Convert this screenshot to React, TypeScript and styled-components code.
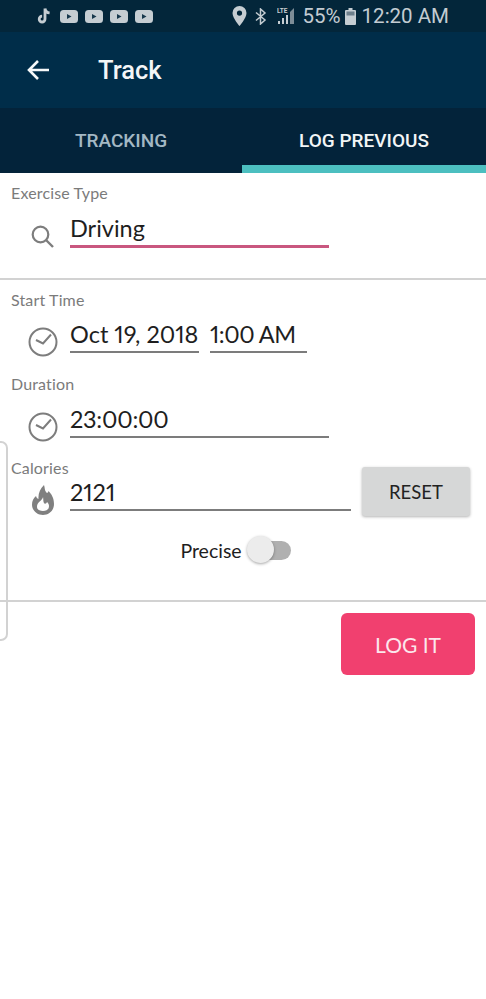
import styled, { createGlobalStyle } from "styled-components";

const GlobalStyle = createGlobalStyle`
  html, body {
    margin: 0;
    padding: 0;
    background: #fff;
  }
  * {
    box-sizing: border-box;
  }
`;

const Page = styled.div`
  position: relative;
  width: 486px;
  height: 999px;
  overflow: hidden;
  background: #fff;
  font-family: Lato, "Open Sans", sans-serif;
  color: #1d1d1d;
`;

const StatusBar = styled.div`
  height: 32px;
  background: #03263a;
  display: flex;
  align-items: center;
  justify-content: space-between;
  padding: 0 37px 0 37px;
  color: #c3ccd2;
  font-family: Roboto, sans-serif;
`;

const IconGroup = styled.div<{ $gap: number }>`
  display: flex;
  align-items: center;
  gap: ${(p) => p.$gap}px;
`;

const StatusItem = styled.span<{ $left?: number }>`
  display: flex;
  align-items: center;
  font-size: 20.5px;
  line-height: 32px;
  margin-left: ${(p) => p.$left ?? 0}px;
`;

const AppBar = styled.div`
  height: 76px;
  background: #002d49;
  display: flex;
  align-items: center;
  padding-left: 26px;
  gap: 48px;
`;

const Title = styled.h1`
  margin: 0;
  font-family: Roboto, sans-serif;
  font-size: 25.5px;
  font-weight: 500;
  color: #f4f6f7;
`;

const Tabs = styled.div`
  height: 65px;
  background: #03233a;
  display: grid;
  grid-template-columns: 242px 244px;
`;

const Tab = styled.div<{ $active?: boolean }>`
  display: flex;
  align-items: center;
  justify-content: center;
  padding-top: 8px;
  font-family: Roboto, sans-serif;
  font-size: 19px;
  font-weight: 500;
  color: ${(p) => (p.$active ? "#f2f5f6" : "#a3b8c4")};
  border-bottom: 8px solid ${(p) => (p.$active ? "#4cbfc0" : "transparent")};
`;

const Section = styled.section<{ $height: number }>`
  height: ${(p) => p.$height}px;
  padding: 11px 11px 0;
  border-bottom: 2px solid #d2d2d2;
`;

const Label = styled.div<{ $top?: number }>`
  font-size: 16px;
  letter-spacing: 0.15px;
  line-height: 18px;
  color: #7b7b7b;
  margin-top: ${(p) => p.$top ?? 0}px;
`;

const FieldRow = styled.div<{ $top?: number }>`
  display: flex;
  align-items: flex-end;
  margin-top: ${(p) => p.$top ?? 0}px;
`;

const IconSlot = styled.div<{ $right: number; $drop?: number }>`
  width: 59px;
  display: flex;
  justify-content: flex-end;
  padding-right: ${(p) => p.$right}px;
  margin-bottom: ${(p) => -(p.$drop ?? 0)}px;
`;

const Field = styled.div<{
  $width: number;
  $focused?: boolean;
  $left?: number;
  $tracking?: number;
}>`
  width: ${(p) => p.$width}px;
  margin-left: ${(p) => p.$left ?? 0}px;
  font-size: 23.5px;
  font-variant-numeric: proportional-nums;
  letter-spacing: ${(p) => p.$tracking ?? 0}px;
  line-height: 32px;
  color: #1e1e1e;
  white-space: nowrap;
  border-bottom: ${(p) => (p.$focused ? "3px solid #c9577f" : "2px solid #7c7c7c")};
  padding-bottom: 1px;
`;

const ResetButton = styled.button`
  width: 108px;
  height: 49px;
  margin: 0 0 -5px 11px;
  border: none;
  border-radius: 3px;
  background: #d6d7d7;
  box-shadow: 0 1px 3px rgba(0, 0, 0, 0.3);
  font-family: inherit;
  font-size: 18.5px;
  color: #222;
`;

const PreciseRow = styled.div`
  display: flex;
  align-items: center;
  justify-content: center;
  gap: 5px;
  margin: 25px 0 0 -15px;
  font-size: 19.5px;
  color: #1e1e1e;
`;

const Switch = styled.div`
  position: relative;
  width: 44px;
  height: 28px;
  display: flex;
  align-items: center;
  justify-content: flex-end;
`;

const SwitchTrack = styled.div`
  width: 36px;
  height: 19px;
  border-radius: 10px;
  background: #b0b0b0;
`;

const SwitchThumb = styled.div`
  position: absolute;
  left: 0;
  top: 0;
  width: 27px;
  height: 27px;
  border-radius: 50%;
  background: #ececec;
  box-shadow: 0 1px 3px rgba(0, 0, 0, 0.35);
`;

const Actions = styled.div`
  display: flex;
  justify-content: flex-end;
  padding: 11px 11px 0 0;
`;

const LogButton = styled.button`
  width: 134px;
  height: 62px;
  border: none;
  border-radius: 6px;
  background: #f1406f;
  font-family: inherit;
  font-size: 21px;
  color: #fbe7ec;
`;

const EdgeHandle = styled.div`
  position: absolute;
  left: -6px;
  top: 441px;
  width: 14px;
  height: 200px;
  border: 2px solid #d2d2d2;
  border-radius: 8px;
  background: transparent;
`;

const YouTubeIcon = () => (
  <svg width="18" height="13" viewBox="0 0 18 13">
    <rect width="18" height="13" rx="3.5" fill="#c5cdd2" />
    <path d="M7 4l4.5 2.5L7 9z" fill="#17384c" />
  </svg>
);

const TikTokIcon = () => (
  <svg width="16" height="18" viewBox="0 0 16 18">
    <path
      d="M8 1.5v10.6a2.9 2.9 0 1 1-2.9-2.9M8 1.500c.3 2.7 2 4.200 4.600 4.400"
      fill="none"
      stroke="#c5cdd2"
      strokeWidth="2.8"
    />
  </svg>
);

const PinIcon = () => (
  <svg width="15" height="20" viewBox="0 0 15 20">
    <path
      fillRule="evenodd"
      d="M7.5 0A7 7 0 0 0 .5 7c0 5 7 13 7 13s7-8 7-13a7 7 0 0 0-7-7zm0 4.5a2.6 2.6 0 1 1 0 5.2 2.6 2.6 0 0 1 0-5.2z"
      fill="#c5cdd2"
    />
  </svg>
);

const BluetoothIcon = () => (
  <svg width="12" height="17" viewBox="0 0 12 17">
    <path
      d="M1 4.5l9 7.5-4.500 4V1l4.500 4-9 7.500"
      fill="none"
      stroke="#c5cdd2"
      strokeWidth="1.5"
    />
  </svg>
);

const SignalIcon = () => (
  <svg width="18" height="18" viewBox="0 0 18 18">
    <text x="0" y="6" fontSize="6.500" fontWeight="700" fontFamily="Roboto, sans-serif" fill="#c5cdd2">
      LTE
    </text>
    <path d="M1 17h2v-3H1zM5 17h2v-6H5zM9 17h2V8H9z" fill="#c5cdd2" />
    <path d="M13 17h4V1l-4 4z" fill="#7d8d97" />
  </svg>
);

const BatteryIcon = () => (
  <svg width="11" height="17" viewBox="0 0 11 17">
    <path d="M3.500 0h4v2h-4z" fill="#c5cdd2" />
    <rect y="2" width="11" height="15" rx="1" fill="#c5cdd2" />
    <rect x="1.500" y="3.500" width="8" height="4" fill="#6d7f8b" />
  </svg>
);

const BackIcon = () => (
  <svg width="24" height="22" viewBox="0 0 24 22">
    <path d="M23 11H3M12 2l-9 9 9 9" fill="none" stroke="#f6f8f9" strokeWidth="2.600" />
  </svg>
);

const SearchIcon = () => (
  <svg width="23" height="23" viewBox="0 0 23 23">
    <circle cx="9.500" cy="9.500" r="7.800" fill="none" stroke="#7d7d7d" strokeWidth="2.200" />
    <path d="M15 15l7 7" stroke="#7d7d7d" strokeWidth="2.400" />
  </svg>
);

const ClockIcon = () => (
  <svg width="30" height="30" viewBox="0 0 30 30">
    <circle cx="15" cy="15" r="13.500" fill="none" stroke="#7d7d7d" strokeWidth="2" />
    <path d="M8 13l7 3.500 8-9" fill="none" stroke="#7d7d7d" strokeWidth="2" />
  </svg>
);

const FlameIcon = () => (
  <svg width="22" height="30" viewBox="0 0 22 30">
    <path
      fillRule="evenodd"
      d="M12 0C13 3 12.500 5 14 7C15 8.500 16 8 16.500 6C19.500 9 22 13 22 19C22 25.500 17 30 11 30C5 30 0 25.500 0 19.500C0 16 1.500 13 4 11C4.500 12.500 5 13.500 6.500 14C6 9 8 3.500 12 0zM11 12C11 15 5 17 5 21.500C5 25 8 26 11 26C14.500 26 17 24.500 17 21C17 19 16 18 15 17C14.500 18.500 13.500 19 12.500 18.500C11 17.500 11.500 14 11 12z"
      fill="#808080"
    />
  </svg>
);

export default function App() {
  return (
    <Page>
      <GlobalStyle />
      <StatusBar>
        <IconGroup $gap={7}>
          <TikTokIcon />
          <YouTubeIcon />
          <YouTubeIcon />
          <YouTubeIcon />
          <YouTubeIcon />
        </IconGroup>
        <IconGroup $gap={0}>
          <PinIcon />
          <StatusItem $left={8}>
            <BluetoothIcon />
          </StatusItem>
          <StatusItem $left={10}>
            <SignalIcon />
          </StatusItem>
          <StatusItem $left={8}>55%</StatusItem>
          <StatusItem $left={4}>
            <BatteryIcon />
          </StatusItem>
          <StatusItem $left={6}>12:20 AM</StatusItem>
        </IconGroup>
      </StatusBar>
      <AppBar>
        <BackIcon />
        <Title>Track</Title>
      </AppBar>
      <Tabs>
        <Tab>TRACKING</Tab>
        <Tab $active>LOG PREVIOUS</Tab>
      </Tabs>

      <Section $height={107}>
        <Label>Exercise Type</Label>
        <FieldRow $top={10}>
          <IconSlot $right={16}>
            <SearchIcon />
          </IconSlot>
          <Field $width={259} $focused>
            Driving
          </Field>
        </FieldRow>
      </Section>

      <Section $height={322}>
        <Label>Start Time</Label>
        <FieldRow $top={9}>
          <IconSlot $right={12} $drop={4}>
            <ClockIcon />
          </IconSlot>
          <Field $width={129}>Oct 19, 2018</Field>
          <Field $width={97} $left={11} $tracking={-0.5}>
            1:00 AM
          </Field>
        </FieldRow>
        <Label $top={22}>Duration</Label>
        <FieldRow $top={10}>
          <IconSlot $right={12} $drop={4}>
            <ClockIcon />
          </IconSlot>
          <Field $width={259} $tracking={-0.25}>
            23:00:00
          </Field>
        </FieldRow>
        <Label $top={21}>Calories</Label>
        <FieldRow $top={-10}>
          <IconSlot $right={16} $drop={4}>
            <FlameIcon />
          </IconSlot>
          <Field $width={281}>2121</Field>
          <ResetButton>RESET</ResetButton>
        </FieldRow>
        <PreciseRow>
          Precise
          <Switch>
            <SwitchTrack />
            <SwitchThumb />
          </Switch>
        </PreciseRow>
      </Section>

      <Actions>
        <LogButton>LOG IT</LogButton>
      </Actions>
      <EdgeHandle />
    </Page>
  );
}
